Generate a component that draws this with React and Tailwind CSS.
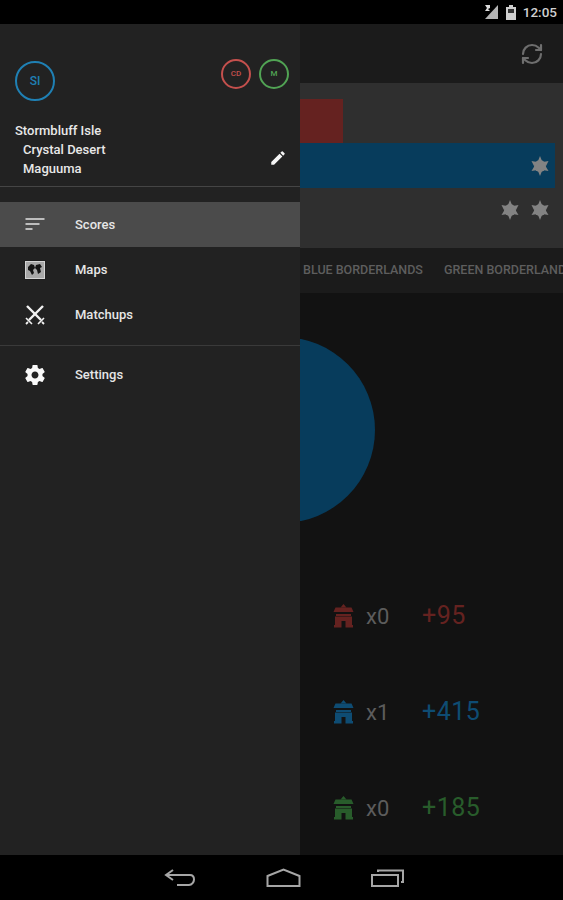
import { RefreshCw } from 'lucide-react';

function Badge({ label, className, textClass }) {
  return (
    <div className={`flex items-center justify-center rounded-full border-2 ${className}`}>
      <span className={`font-medium ${textClass}`}>{label}</span>
    </div>
  );
}

function NavItem({ icon, label, active }) {
  return (
    <div className={`flex h-[45px] items-center ${active ? 'bg-[#4b4b4b]' : ''}`}>
      <div className="flex w-[75px] justify-center pr-[6px]">{icon}</div>
      <span className="text-[13px] font-medium text-[#e6e6e6]">{label}</span>
    </div>
  );
}

function SortIcon() {
  return (
    <svg width="20" height="16" viewBox="0 0 20 16" fill="#bdbdbd">
      <rect x="0.5" y="1" width="19" height="2" />
      <rect x="0.5" y="6" width="14" height="2" />
      <rect x="0.5" y="11" width="7" height="2" />
    </svg>
  );
}

function MapIcon() {
  return (
    <svg width="22" height="20" viewBox="0 0 22 20">
      <rect x="0.5" y="0.5" width="21" height="19" fill="#1b1b1b" />
      <rect x="1.5" y="1.5" width="19" height="17" fill="#a8a8a8" stroke="#d4d4d4" />
      <path d="M4 7l3-3 3 1 1 3-2 2 1 3-2 2-2-4-2-1z" fill="#151515" />
      <path d="M12 5l4-1 2 3-2 1 1 4-3 2-1-4-2-2z" fill="#151515" />
    </svg>
  );
}

function SwordsIcon() {
  return (
    <svg width="22" height="22" viewBox="0 0 22 22" stroke="#f2f2f2" fill="none">
      <path d="M19 2L5 16" strokeWidth="2.4" />
      <path d="M3 2l14 14" strokeWidth="2.4" />
      <path d="M2 14l6 6M20 14l-6 6" strokeWidth="1.6" />
      <path d="M2 20l2-2M20 20l-2-2" strokeWidth="1.8" />
    </svg>
  );
}

function GearIcon() {
  return (
    <svg width="24" height="24" viewBox="0 0 24 24" fill="#fafafa">
      <path d="M19.43 12.98c.04-.32.07-.64.07-.98s-.03-.66-.07-.98l2.11-1.65c.19-.15.24-.42.12-.64l-2-3.46c-.12-.22-.39-.3-.61-.22l-2.49 1c-.52-.4-1.08-.73-1.69-.98l-.38-2.65C14.46 2.18 14.25 2 14 2h-4c-.25 0-.46.18-.49.42l-.38 2.65c-.61.25-1.17.59-1.69.98l-2.49-1c-.23-.09-.49 0-.61.22l-2 3.46c-.13.22-.07.49.12.64l2.11 1.65c-.04.32-.07.65-.07.98s.03.66.07.98l-2.11 1.65c-.19.15-.24.42-.12.64l2 3.46c.12.22.39.3.61.22l2.49-1c.52.4 1.08.73 1.69.98l.38 2.65c.03.24.24.42.49.42h4c.25 0 .46-.18.49-.42l.38-2.65c.61-.25 1.17-.59 1.69-.98l2.49 1c.23.09.49 0 .61-.22l2-3.46c.12-.22.07-.49-.12-.64l-2.11-1.65zM12 15.5c-1.93 0-3.5-1.57-3.5-3.5s1.57-3.5 3.5-3.5 3.5 1.57 3.5 3.5-1.57 3.5-3.5 3.5z" />
    </svg>
  );
}

function PencilIcon() {
  return (
    <svg width="18" height="18" viewBox="0 0 24 24" fill="#f5f5f5">
      <path d="M3 17.25V21h3.75L17.81 9.94l-3.75-3.75L3 17.25zM20.71 7.04a1 1 0 000-1.41l-2.34-2.34a1 1 0 00-1.41 0l-1.83 1.83 3.75 3.75 1.83-1.83z" />
    </svg>
  );
}

function Star() {
  return (
    <svg width="18" height="20" viewBox="0 0 18 20" fill="#838383">
      <circle cx="9" cy="10" r="6" />
      <path d="M9 0l2 5H7zM9 20l-2-5h4zM0.5 5l5.5 1-3 4zM17.5 5l-5.5 1 3 4zM0.5 15l3-5 3 4zM17.5 15l-3-5-3 4z" />
    </svg>
  );
}

function Keep({ color }) {
  return (
    <svg width="21" height="24" viewBox="0 0 21 24" fill={color}>
      <path d="M10.5 0l3 3.5h-6z" />
      <path d="M2.5 3.5h16l2 4.5H.5z" />
      <path d="M3 10h15v2H3z" />
      <path d="M2 12.5h17V21h1v2.5h-7.5V17h-4v6.5H1V21h1z" />
    </svg>
  );
}

function ScoreRow({ color, textClass, count, score }) {
  return (
    <div className="flex h-[24px] items-center">
      <div className="flex w-[33px] justify-start"><Keep color={color} /></div>
      <span className="w-[56px] text-[22px] text-[#5c5c5c]">{count}</span>
      <span className={`text-[25px] tracking-[0.5px] ${textClass}`}>{score}</span>
    </div>
  );
}

export default function App() {
  return (
    <div className="flex h-[900px] w-[563px] flex-col overflow-hidden bg-black font-['Roboto',sans-serif]">
      {/* status bar */}
      <div className="flex h-[24px] shrink-0 items-center justify-end gap-[7px] pr-[6px]">
        <svg width="15" height="16" viewBox="0 0 15 16" fill="#b5b5b5">
          <path d="M14 1v14H1z" />
          <path d="M1 1h5v3l-2 1 2 2H1l2-3z" fill="#dcdcdc" />
        </svg>
        <svg width="10" height="15" viewBox="0 0 10 15" fill="#cfcfcf">
          <path d="M3 0h4v2h3v13H0V2h3z" />
          <rect x="2" y="4" width="6" height="4" fill="#333" />
        </svg>
        <span className="text-[13.5px] font-medium text-[#d0d0d0]">12:05</span>
      </div>

      <div className="flex min-h-0 flex-1">
        {/* drawer */}
        <aside className="flex w-[300px] shrink-0 flex-col bg-[#222222]">
          <div className="h-[163px] border-b border-[#454545] pl-[15px] pr-[11px] pt-[35px]">
            <div className="flex items-start justify-between">
              <Badge label="SI" className="mt-[2px] size-[40px] border-[#1f80b4]" textClass="text-[12px] text-[#1f80b4]" />
              <div className="flex gap-[8px]">
                <Badge label="CD" className="size-[30px] border-[#c4504d]" textClass="text-[8px] text-[#c4504d]" />
                <Badge label="M" className="size-[30px] border-[#51a354]" textClass="text-[8px] text-[#51a354]" />
              </div>
            </div>
            <div className="mt-[20px] flex items-end justify-between text-[13px] font-medium leading-[19px] text-[#e8e8e8]">
              <div>
                <div>Stormbluff Isle</div>
                <div className="pl-[8px]">Crystal Desert</div>
                <div className="pl-[8px]">Maguuma</div>
              </div>
              <div className="mb-[11px] mr-[2px]"><PencilIcon /></div>
            </div>
          </div>
          <div className="mt-[15px]">
            <NavItem active icon={<SortIcon />} label="Scores" />
            <NavItem icon={<MapIcon />} label="Maps" />
            <NavItem icon={<SwordsIcon />} label="Matchups" />
          </div>
          <div className="mt-[8px] border-t border-[#3a3a3a] pt-[6px]">
            <NavItem icon={<GearIcon />} label="Settings" />
          </div>
        </aside>

        {/* dimmed content behind the drawer */}
        <main className="flex min-w-0 flex-1 flex-col bg-[#121212]">
          <div className="flex h-[59px] shrink-0 items-center justify-end bg-[#1b1b1b] pr-[19px]">
            <RefreshCw size={24} strokeWidth={2.2} color="#6e6e6e" />
          </div>
          <div className="h-[165px] shrink-0 bg-[#2f2f2f] pr-[8px] pt-[16px]">
            <div className="h-[44px] w-[43px] bg-[#652220]" />
            <div className="flex h-[45px] items-center justify-end bg-[#073c5c] pr-[6px]"><Star /></div>
            <div className="flex h-[44px] items-center justify-end gap-[12px] pr-[6px]"><Star /><Star /></div>
          </div>
          <div className="flex h-[45px] shrink-0 items-center gap-[21px] overflow-hidden whitespace-nowrap bg-[#1b1b1b] pl-[3px] text-[12.5px] font-medium text-[#5e5e5e]">
            <span>BLUE BORDERLANDS</span>
            <span>GREEN BORDERLANDS</span>
          </div>
          <div className="h-[228px] shrink-0 pt-[46px]">
            <svg width="75" height="182" viewBox="0 0 75 182">
              <circle cx="-18" cy="91" r="93" fill="#073c5c" />
            </svg>
          </div>
          <div className="flex flex-col gap-[72px] pl-[33px] pt-[83px]">
            <ScoreRow color="#652220" textClass="text-[#652220]" count="x0" score="+95" />
            <ScoreRow color="#0e4c73" textClass="text-[#0e4c73]" count="x1" score="+415" />
            <ScoreRow color="#285c2b" textClass="text-[#285c2b]" count="x0" score="+185" />
          </div>
        </main>
      </div>

      {/* nav bar */}
      <div className="flex h-[45px] shrink-0 items-center justify-center gap-[70px] pl-[5px]">
        <svg width="32" height="20" viewBox="0 0 32 20" fill="none" stroke="#a6a6a6" strokeWidth="2">
          <path d="M9 2L2 7l7 5" />
          <path d="M2 7h24c3 0 4 2 4 4.5S28 17 25 17H13" transform="translate(0 0)" />
        </svg>
        <svg width="35" height="19" viewBox="0 0 35 19" fill="none" stroke="#a6a6a6" strokeWidth="2">
          <path d="M1.500 8L17.500 1.500 33.500 8v10h-32z" />
        </svg>
        <svg width="33" height="18" viewBox="0 0 33 18" fill="none" stroke="#a6a6a6" strokeWidth="2">
          <rect x="1" y="6" width="26" height="11" />
          <path d="M7 3V1.500h25V13h-2" />
        </svg>
      </div>
    </div>
  );
}
